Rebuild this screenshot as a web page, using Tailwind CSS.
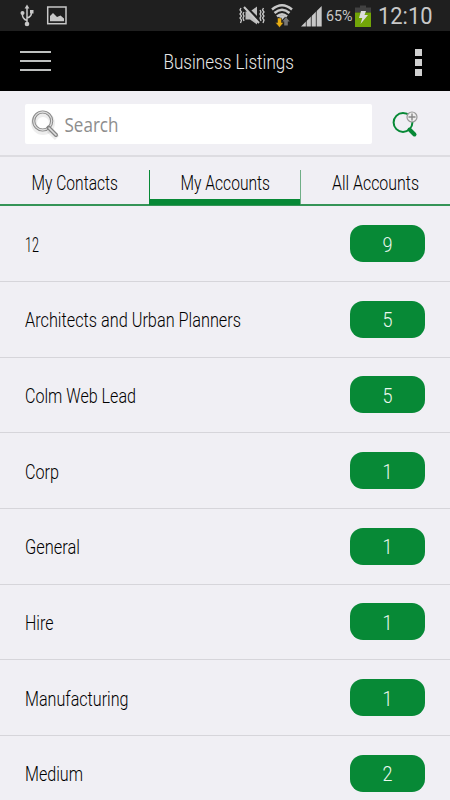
<!DOCTYPE html>
<html lang="en">
<head>
<meta charset="utf-8">
<title>Business Listings</title>
<script src="https://cdn.jsdelivr.net/npm/@tailwindcss/browser@4"></script>
</head>
<body class="w-[450px] h-[800px] overflow-hidden bg-[#f0eff4] font-['Roboto',sans-serif] font-light text-[20px] text-black">
<div class="flex flex-col h-[800px] overflow-hidden">
  <div class="h-[31px] shrink-0 bg-[#1f1f1f] flex text-[#c8c8c8]">
    <svg class="w-full h-full" viewBox="0 0 450 31" fill="none">
      <g stroke="#c8c8c8" stroke-width="1.5"><path d="M27 7V24M27 20.5Q22 19 22.4 13.5M27 18Q31.5 17 31.6 12"/></g>
      <g fill="#c8c8c8"><path d="M27 4.5l2.4 4h-4.8z"/><circle cx="27" cy="24" r="2.3"/><circle cx="22.5" cy="13" r="2"/><path d="M30 10h3.5v3.5H30z"/></g>
      <rect x="47.7" y="7" width="18.3" height="16.7" stroke="#c8c8c8" stroke-width="1.5"/>
      <path d="M50 21.3v-5.3l3-3 4 4 3.5-1.5 3.5 3v2.8z" fill="#c8c8c8"/>
      <path d="M245.500 11.500h4.500l7-5v18l-7-5h-4.500z" fill="#bdbdbd"/>
      <path d="M246 7l15 15" stroke="#1f1f1f" stroke-width="3"/>
      <path d="M244 7l15 16" stroke="#c8c8c8" stroke-width="2"/>
      <path d="M241 8l-1 2 1.500 2-1.500 2 1.500 2-1.500 2 1.500 2-1 3M244 12l-1 2 1 2-1 2 1 3M260 10l1 2-1 2 1 2-1 2 1 3M263.500 8l-1 2 1.500 2-1.500 2 1.500 2-1.500 2 1.500 2-1 3" stroke="#c8c8c8" stroke-width="1.300"/>
      <path d="M272 9.500Q282 1 292 9.500M274.500 13Q282 6.500 289.500 13M277 16.500Q282 12 287 16.500" stroke="#c8c8c8" stroke-width="2.500"/>
      <path d="M278.500 16.500L282 15l3.500 1.500L282 20z" fill="#c8c8c8"/>
      <path d="M277.500 18h4v4.500h2.200L279.500 27.500l-4.200-5h2.200z" fill="#e9ae12" stroke="#1f1f1f" stroke-width=".5"/>
      <path d="M284.200 25.500v-4h-1.900l3.700-4.500 3.700 4.500h-1.900v4z" fill="#777"/>
      <path d="M301 26.500L321.700 6v20.500z" fill="#c8c8c8"/>
      <path d="M306.300 8v19M311.300 7v20M316.300 6v21" stroke="#1f1f1f" stroke-width=".8"/>
      <text x="326" y="21" textLength="26.500" lengthAdjust="spacingAndGlyphs" font-family="Roboto" font-weight="400" font-size="14.500" fill="#c8c8c8">65%</text>
      <path d="M360 5.500h6v2h5v5h-16v-5h5z" fill="#414141"/><path d="M355 12.500h16v14.500h-16z" fill="#72a508"/>
      <path d="M361 11h5l-1.500 4h3.500l-7.500 9 1.800-6h-3.300z" fill="#ddd"/>
      <text x="378" y="23.500" textLength="54.500" lengthAdjust="spacingAndGlyphs" font-family="Roboto" font-weight="400" font-size="23" fill="#c8c8c8">12:10</text>
    </svg>
  </div>

  <header class="h-[60px] shrink-0 bg-black flex items-center pl-5 pr-[28px] text-[#e0e0e0]">
    <div class="w-[31px] flex flex-col gap-[7px]">
      <div class="h-[2px] bg-[#bec0bf]"></div><div class="h-[2px] bg-[#bec0bf]"></div><div class="h-[2px] bg-[#bec0bf]"></div>
    </div>
    <svg class="w-[220px] h-8 ml-[109px]" viewBox="0 0 220 32"><text x="3.500" y="24" textLength="130.500" lengthAdjust="spacingAndGlyphs" font-size="21" fill="#e8e8e8">Business Listings</text></svg>
    <div class="w-[7px] flex flex-col gap-[3px] pt-[2px] ml-auto">
      <div class="size-[7px] bg-[#d0d0d0]"></div><div class="size-[7px] bg-[#d0d0d0]"></div><div class="size-[7px] bg-[#d0d0d0]"></div>
    </div>
  </header>

  <div class="h-[66px] shrink-0 border-b-2 border-[#dddce1] pt-[13px] pl-[25px] flex">
    <div class="w-[347px] h-10 rounded-[2px] bg-white flex">
      <svg class="w-[160px] h-10" viewBox="0 0 160 40" fill="none">
        <circle cx="18" cy="19" r="9" stroke="#000" stroke-opacity=".07" stroke-width="6"/>
        <path d="M24 26l8 8" stroke="#000" stroke-opacity=".08" stroke-width="6"/>
        <circle cx="17.700" cy="17" r="9" stroke="#888" stroke-width="3.200"/>
        <circle cx="17.700" cy="17" r="9" stroke="#ddd" stroke-width="1.300"/>
        <path d="M23.500 23.500l7.500 7.500" stroke="#858585" stroke-width="4" stroke-linecap="round"/>
        <path d="M24 24l7 7" stroke="#ddd" stroke-width="1.600" stroke-linecap="round"/>
        <text x="39.500" y="28" textLength="54" lengthAdjust="spacingAndGlyphs" font-family="Open Sans" font-weight="400" font-size="20.500" fill="#8d8d8d">Search</text>
      </svg>
    </div>
    <svg class="w-[30px] h-10 ml-[18px]" viewBox="0 0 30 40" fill="none">
      <circle cx="13" cy="18.500" r="9.400" stroke="#078936" stroke-width="2"/>
      <path d="M19.500 25.500l5 5" stroke="#078936" stroke-width="4" stroke-linecap="round"/>
      <circle cx="22" cy="13" r="5" fill="#eee" stroke="#999" stroke-width="1.200"/>
      <path d="M18.500 13h7M22 9.500v7" stroke="#888" stroke-width="1.400"/>
    </svg>
  </div>

  <nav class="h-[49.4px] shrink-0 pt-[13px] border-b-2 border-[#359457] flex">
    <div class="w-[149px]"><svg class="w-full h-[34px]"><text x="31.500" y="19.500" textLength="86.500" lengthAdjust="spacingAndGlyphs" font-size="19.500">My Contacts</text></svg></div>
    <div class="w-[151px] h-[35px] border-l border-b-[6px] border-l-[#078936] border-b-[#078936]"><svg class="w-full h-[29px]"><text x="30.500" y="19.500" textLength="89.500" lengthAdjust="spacingAndGlyphs" font-size="19.500">My Accounts</text></svg></div>
    <div class="w-[150px] border-l border-[#6fae86]"><svg class="w-full h-[34px]"><text x="31" y="19.500" textLength="87" lengthAdjust="spacingAndGlyphs" font-size="19.500">All Accounts</text></svg></div>
  </nav>

  <main id="list" class="flex flex-col"></main>
</div>
<template id="row">
  <div class="h-[75.65px] shrink-0 border-b-[1.5px] border-[#d6d5da] pl-[25px] pr-[25px] flex justify-between items-center">
    <svg class="w-[310px] h-9"><text class="label" x="0" y="25.500" lengthAdjust="spacingAndGlyphs" font-size="20"></text></svg>
    <div class="w-[75px] h-[37px] rounded-[13px] bg-[#078936] text-[#edf8f0] flex items-center justify-center"><span class="count block scale-x-90 leading-none text-[20px] pt-[2px]"></span></div>
  </div>
</template>
<script>
const rows = [['12',9,14],['Architects and Urban Planners',5,216],['Colm Web Lead',5,111],['Corp',1,34],['General',1,55],['Hire',1,28.5],['Manufacturing',1,103.5],['Medium',2,58]];
for (const [name, count, width] of rows) {
  const row = document.getElementById('row').content.cloneNode(true);
  const label = row.querySelector('.label');
  label.textContent = name;
  label.setAttribute('textLength', width);
  row.querySelector('.count').textContent = count;
  document.getElementById('list').append(row);
}
</script>
</body>
</html>
